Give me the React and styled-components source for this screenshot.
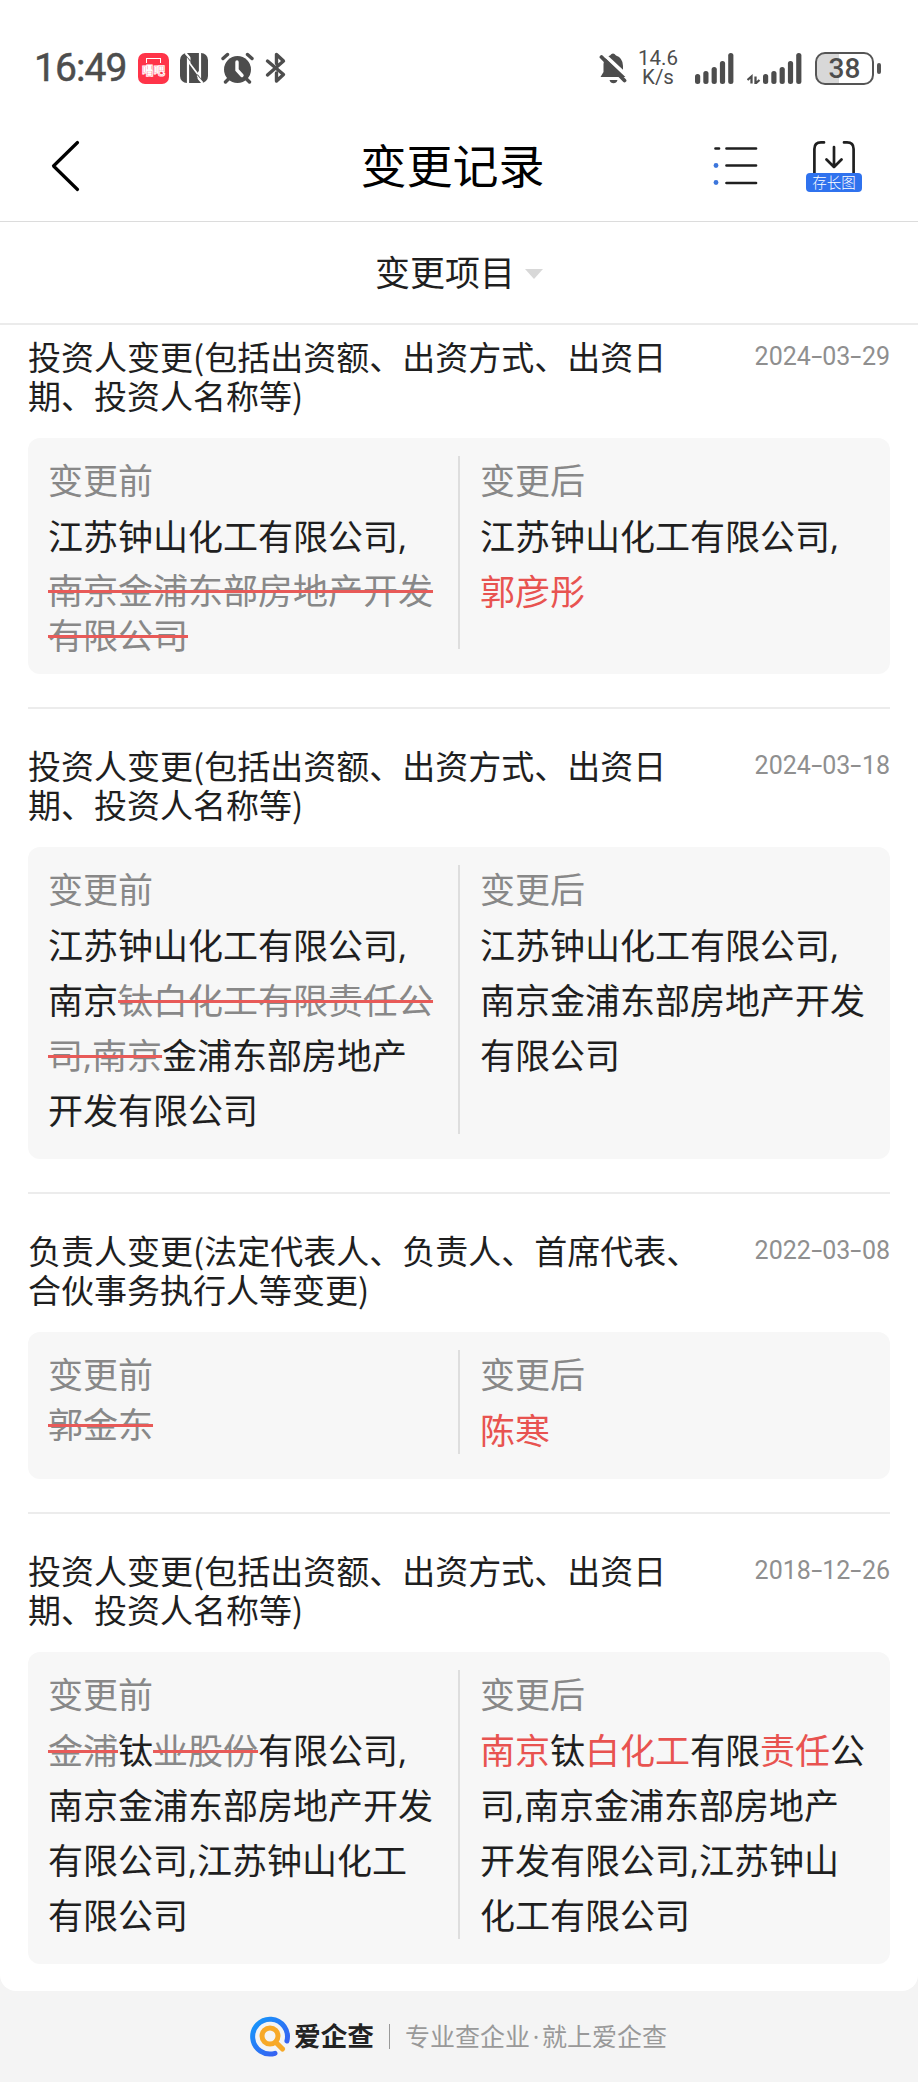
import React from "react";
import styled, { createGlobalStyle } from "styled-components";

const CJK = '"Noto Sans CJK SC", sans-serif';

const GlobalStyle = createGlobalStyle`
  * { box-sizing: border-box; }
  body { margin: 0; background: #f4f4f4; font-family: ${CJK}; color: #1f1f1f; }
`;

const Page = styled.div`
  width: 918px;
  height: 2082px;
  display: flex;
  flex-direction: column;
  overflow: hidden;
  background: #f4f4f4;
`;

const Sheet = styled.main`
  flex: none;
  height: 1991px;
  background: #fff;
  border-radius: 0 0 16px 16px;
`;

const StatusBar = styled.div`
  height: 110px;
  padding: 26px 37px 0 34px;
  display: flex;
  align-items: center;
  justify-content: space-between;
  color: #4d4d4d;
  font-family: Roboto, sans-serif;
`;

const StatusGroup = styled.div`
  display: flex;
  align-items: center;
`;

const Clock = styled.span`
  width: 104px;
  font-size: 39px;
  line-height: 44px;
  letter-spacing: -0.9px;
  white-space: nowrap;
  -webkit-text-stroke: 0.5px #4d4d4d;
`;

const AppBadge = styled.div`
  width: 31px;
  height: 31px;
  padding-top: 5px;
  display: flex;
  flex-direction: column;
  align-items: center;
  border-radius: 7px;
  background: #ff3449;

  &::before {
    content: "";
    width: 13px;
    height: 4px;
    border: 1.3px solid #fff;
    border-bottom: 0;
  }
`;

const AppBadgeText = styled.span`
  margin-top: 1px;
  font-family: ${CJK};
  font-size: 11.5px;
  font-weight: 700;
  line-height: 13px;
  white-space: nowrap;
  color: #ff3449;
  -webkit-text-stroke: 0.9px #fff;
`;

const Speed = styled.div`
  width: 44px;
  margin: 0 15px 0 9px;
  font-size: 20.5px;
  line-height: 19.5px;
  text-align: center;
`;

const Battery = styled.div`
  width: 59px;
  height: 33px;
  margin-left: 13px;
  border: 2.5px solid #555;
  border-radius: 10px;
  background: linear-gradient(90deg, #d8d8d8 22px, #fff 22px);
  font-size: 28px;
  font-weight: 500;
  line-height: 29px;
  text-align: center;
`;

const BatteryTip = styled.div`
  width: 4px;
  height: 11px;
  margin-left: 3px;
  border-radius: 2px;
  background: #555;
`;

const NavBar = styled.header`
  height: 112px;
  padding: 0 56px 0 50px;
  display: grid;
  grid-template-columns: 150px 1fr 150px;
  align-items: center;
  border-bottom: 1px solid #dcdcdc;
`;

const NavTitle = styled.h1`
  margin: 0 7px 6px 0;
  font-size: 46px;
  font-weight: 400;
  line-height: 60px;
  text-align: center;
  color: #000;
`;

const NavActions = styled.div`
  display: flex;
  align-items: flex-start;
  justify-content: space-between;
`;

const SaveButton = styled.div`
  width: 56px;
  display: flex;
  flex-direction: column;
  align-items: center;
`;

const SaveLabel = styled.span`
  width: 56px;
  height: 19px;
  border-radius: 4px;
  background: #2f72ee;
  color: #fff;
  font-size: 14.5px;
  font-weight: 300;
  line-height: 17px;
  text-align: center;
`;

const FilterBar = styled.div`
  height: 103px;
  padding-bottom: 3px;
  display: flex;
  align-items: center;
  justify-content: center;
  gap: 10px;
  border-bottom: 2px solid #ebebeb;
  font-size: 35px;
  line-height: 50px;
`;

const Caret = styled.i`
  margin-top: 6px;
  border: 9px solid transparent;
  border-top: 10px solid #d8d8d8;
  border-bottom: 0;
`;

const Record = styled.section`
  margin: 0 28px;
  padding: ${(p) => (p.$first ? "12px" : "36.5px")} 0 33.5px;
  border-bottom: ${(p) => (p.$last ? "0" : "2px solid #ececec")};
`;

const RecordHead = styled.div`
  display: flex;
  justify-content: space-between;
  align-items: flex-start;
  height: 101.3px;
`;

const RecordTitle = styled.h2`
  margin: 0;
  font-size: 33px;
  font-weight: 400;
  line-height: 39.3px;
  white-space: nowrap;
`;

const RecordDate = styled.time`
  margin-top: 2px;
  display: flex;
  font-family: Roboto, sans-serif;
  font-size: 25px;
  line-height: 36px;
  color: #8f8f8f;
`;

const Dash = styled.span`
  width: 11.5px;
  text-align: center;
  transform: scaleX(1.6);
`;

const Card = styled.div`
  display: grid;
  grid-template-columns: 410px 2px 1fr;
  padding: 18px 20px 20.5px;
  border-radius: 12px;
  background: #f7f7f7;
`;

const Column = styled.div`
  padding-left: ${(p) => (p.$after ? "20px" : "0")};
  font-family: "Open Sans", ${CJK};
  font-size: 35px;
  white-space: nowrap;
`;

const Rule = styled.div`
  margin-bottom: 4.5px;
  background: #dedede;
`;

const Label = styled.div`
  height: 53.2px;
  line-height: 50px;
  color: #888;
`;

const Line = styled.div`
  height: 55px;
  line-height: 55px;
`;

const RemovedBlock = styled.div`
  margin: ${(p) => (p.$lead ? "-1px 0 0" : "4px 0 -5px")};
  line-height: 45px;
`;

const Removed = styled.span`
  color: #888;
  text-decoration: line-through #e85a58 2.5px;
`;

const Added = styled.span`
  color: #e85350;
`;

const Footer = styled.footer`
  flex: 1;
  display: flex;
  align-items: center;
  padding-left: 250px;
`;

const Brand = styled.strong`
  margin: 0 15px 3px 3px;
  font-size: 26.7px;
  font-weight: 700;
  line-height: 34px;
  color: #222;
`;

const Slogan = styled.span`
  margin: 0 0 3px;
  padding-left: 15px;
  font-size: 25px;
  line-height: 34px;
  color: #999;
`;

const FooterRule = styled.i`
  width: 1px;
  height: 25px;
  background: #999;
`;

const Dot = styled.span`
  display: inline-block;
  width: 12px;
  font-family: "Open Sans", sans-serif;
  text-align: center;
`;

const Icon = styled.svg`
  flex: none;
  margin-left: ${(p) => p.$gap || 0}px;
`;

const Nfc = () => (
  <Icon width="28" height="30" viewBox="0 0 28 30" $gap={11}>
    <rect width="28" height="30" rx="7" fill="#4d4d4d" />
    <path d="M8 30V7.5L18 21M20 0v22.5L10 9M5.500 0l6 7M22.500 30l-6-7" fill="none" stroke="#fff" strokeWidth="2.200" />
    <path d="M10.500 3L18 13v7L10.500 10zM10.500 15l7 9v3l-7-8z" fill="#4d4d4d" />
  </Icon>
);

const Alarm = () => (
  <Icon width="33" height="32" viewBox="0 0 33 32" fill="none" stroke="#4d4d4d" strokeLinecap="round" $gap={13}>
    <circle cx="16.500" cy="17.500" r="13.500" fill="#4d4d4d" stroke="none" />
    <path d="M2 6.500L6.500 2.500M31 6.500l-4.500-4M7.500 27l-3 3M25.500 27l3 3" strokeWidth="3.400" />
    <path d="M16 10v8l5 5.500" stroke="#fff" strokeWidth="3.400" />
  </Icon>
);

const Bluetooth = () => (
  <Icon width="22" height="32" viewBox="0 0 22 32" fill="none" stroke="#4d4d4d" strokeWidth="3.400" strokeLinejoin="round" strokeLinecap="round" $gap={11}>
    <path d="M2.500 9l16 13.500-7 6.500v-8M2.500 23L18.500 9l-7-6.500v9" />
  </Icon>
);

const BellOff = () => (
  <Icon width="28" height="32" viewBox="0 0 28 32">
    <path d="M4.500 12Q5 5 11 3.500Q14 -.5 17 3.500Q24 6 24 14V21L27 25H1.500L4.500 20z" fill="#4d4d4d" />
    <path d="M10.500 28h8q-1 3.300-4 3.300t-4-3.300z" fill="#4d4d4d" />
    <path d="M4 1.500L29 25" stroke="#fff" strokeWidth="3.600" />
    <path d="M2.500 5L25.500 28.500" stroke="#4d4d4d" strokeWidth="3.800" strokeLinecap="round" />
  </Icon>
);

const BAR_HEIGHTS = [10, 13, 17, 23, 31];

const Signal = ({ data }) => (
  <Icon width={data ? 55 : 39} height="31" viewBox={data ? "-16 0 55 31" : "0 0 39 31"} $gap={data ? 13 : 0}>
    {BAR_HEIGHTS.map((h, i) => (
      <rect key={h} x={i * 8.3} y={31 - h} width="5.200" height={h} rx="2.500" fill="#4d4d4d" />
    ))}
    {data && <path d="M-15.500 27l4-3.500v7M-7.500 23.500v7l4-3.500" fill="none" stroke="#4d4d4d" strokeWidth="2.300" />}
  </Icon>
);

const BackIcon = () => (
  <Icon width="31" height="52" viewBox="0 0 31 52" fill="none" stroke="#000" strokeWidth="3.200" strokeLinecap="round" strokeLinejoin="round">
    <path d="M27.500 2.500L3.500 26l24 23.500" />
  </Icon>
);

const ListMark = styled(Icon)`
  margin-top: 5px;
`;

const ListIcon = () => (
  <ListMark width="46" height="40" viewBox="0 0 46 40" stroke="#1f1f1f" strokeWidth="2.700" strokeLinecap="round">
    <path d="M3.500 3.500h3.500M14.500 3.500h29.500M14.500 20.500h29.500M14.500 38h29.500" />
    <circle cx="4" cy="20.500" r="2.400" fill="#3c76dc" stroke="none" />
    <circle cx="4" cy="37.500" r="2.400" fill="#3c76dc" stroke="none" />
  </ListMark>
);

const SaveIcon = () => (
  <Icon width="44" height="33" viewBox="0 0 44 33" fill="none" stroke="#1f1f1f" strokeWidth="2.700" strokeLinecap="round" strokeLinejoin="round">
    <path d="M12 2.400H9Q2.400 2.400 2.400 9V34M32 2.400h3Q41.600 2.400 41.600 9V34M22 7v20M14.500 19.500L22 27l7.500-7.500" />
  </Icon>
);

const LogoMark = () => (
  <Icon width="41" height="41" viewBox="0 0 41 41" fill="none" strokeLinecap="round">
    <defs>
      <linearGradient id="ring" x1="0" y1="0" x2="1" y2="1">
        <stop offset="0" stopColor="#1599fb" />
        <stop offset="1" stopColor="#3d58f0" />
      </linearGradient>
    </defs>
    <path d="M25 37.300A17.400 17.400 0 1 1 36.900 25" stroke="url(#ring)" strokeWidth="5" />
    <circle cx="20" cy="20" r="8" stroke="#f7a928" strokeWidth="5" />
    <path d="M26 26.500L32.500 33" stroke="#f7a928" strokeWidth="5.200" />
  </Icon>
);

const INVESTOR_TITLE = ["投资人变更(包括出资额、出资方式、出资日", "期、投资人名称等)"];
const del = (text) => <Removed>{text}</Removed>;
const add = (text) => <Added>{text}</Added>;

const RECORDS = [
  {
    title: INVESTOR_TITLE,
    date: "2024-03-29",
    before: ["江苏钟山化工有限公司,"],
    removed: ["南京金浦东部房地产开发", "有限公司"],
    after: ["江苏钟山化工有限公司,", add("郭彦彤")],
  },
  {
    title: INVESTOR_TITLE,
    date: "2024-03-18",
    before: [
      "江苏钟山化工有限公司,",
      <>南京{del("钛白化工有限责任公")}</>,
      <>{del("司,南京")}金浦东部房地产</>,
      "开发有限公司",
    ],
    after: ["江苏钟山化工有限公司,", "南京金浦东部房地产开发", "有限公司"],
  },
  {
    title: ["负责人变更(法定代表人、负责人、首席代表、", "合伙事务执行人等变更)"],
    date: "2022-03-08",
    before: [],
    removed: ["郭金东"],
    after: [add("陈寒")],
  },
  {
    title: INVESTOR_TITLE,
    date: "2018-12-26",
    before: [
      <>{del("金浦")}钛{del("业股份")}有限公司,</>,
      "南京金浦东部房地产开发",
      "有限公司,江苏钟山化工",
      "有限公司",
    ],
    after: [
      <>{add("南京")}钛{add("白化工")}有限{add("责任")}公</>,
      "司,南京金浦东部房地产",
      "开发有限公司,江苏钟山",
      "化工有限公司",
    ],
  },
];

const DateText = ({ value }) => {
  const [y, m, d] = value.split("-");
  return (
    <RecordDate>
      {y}<Dash>-</Dash>{m}<Dash>-</Dash>{d}
    </RecordDate>
  );
};

const ChangeRecord = ({ record, first, last }) => (
  <Record $first={first} $last={last}>
    <RecordHead>
      <RecordTitle>
        {record.title[0]}
        <br />
        {record.title[1]}
      </RecordTitle>
      <DateText value={record.date} />
    </RecordHead>
    <Card>
      <Column>
        <Label>变更前</Label>
        {record.before.map((line, i) => <Line key={i}>{line}</Line>)}
        {record.removed && (
          <RemovedBlock $lead={record.before.length === 0}>
            {record.removed.map((line) => <div key={line}>{del(line)}</div>)}
          </RemovedBlock>
        )}
      </Column>
      <Rule />
      <Column $after>
        <Label>变更后</Label>
        {record.after.map((line, i) => <Line key={i}>{line}</Line>)}
      </Column>
    </Card>
  </Record>
);

export default function App() {
  return (
    <Page>
      <GlobalStyle />
      <Sheet>
        <StatusBar>
          <StatusGroup>
            <Clock>16:49</Clock>
            <AppBadge><AppBadgeText>唱吧</AppBadgeText></AppBadge>
            <Nfc />
            <Alarm />
            <Bluetooth />
          </StatusGroup>
          <StatusGroup>
            <BellOff />
            <Speed>14.6<br />K/s</Speed>
            <Signal />
            <Signal data />
            <Battery>38</Battery>
            <BatteryTip />
          </StatusGroup>
        </StatusBar>
        <NavBar>
          <BackIcon />
          <NavTitle>变更记录</NavTitle>
          <NavActions>
            <ListIcon />
            <SaveButton>
              <SaveIcon />
              <SaveLabel>存长图</SaveLabel>
            </SaveButton>
          </NavActions>
        </NavBar>
        <FilterBar>
          变更项目
          <Caret />
        </FilterBar>
        {RECORDS.map((record, i) => (
          <ChangeRecord key={record.date} record={record} first={i === 0} last={i === RECORDS.length - 1} />
        ))}
      </Sheet>
      <Footer>
        <LogoMark />
        <Brand>爱企查</Brand>
        <FooterRule />
        <Slogan>专业查企业<Dot>·</Dot>就上爱企查</Slogan>
      </Footer>
    </Page>
  );
}
